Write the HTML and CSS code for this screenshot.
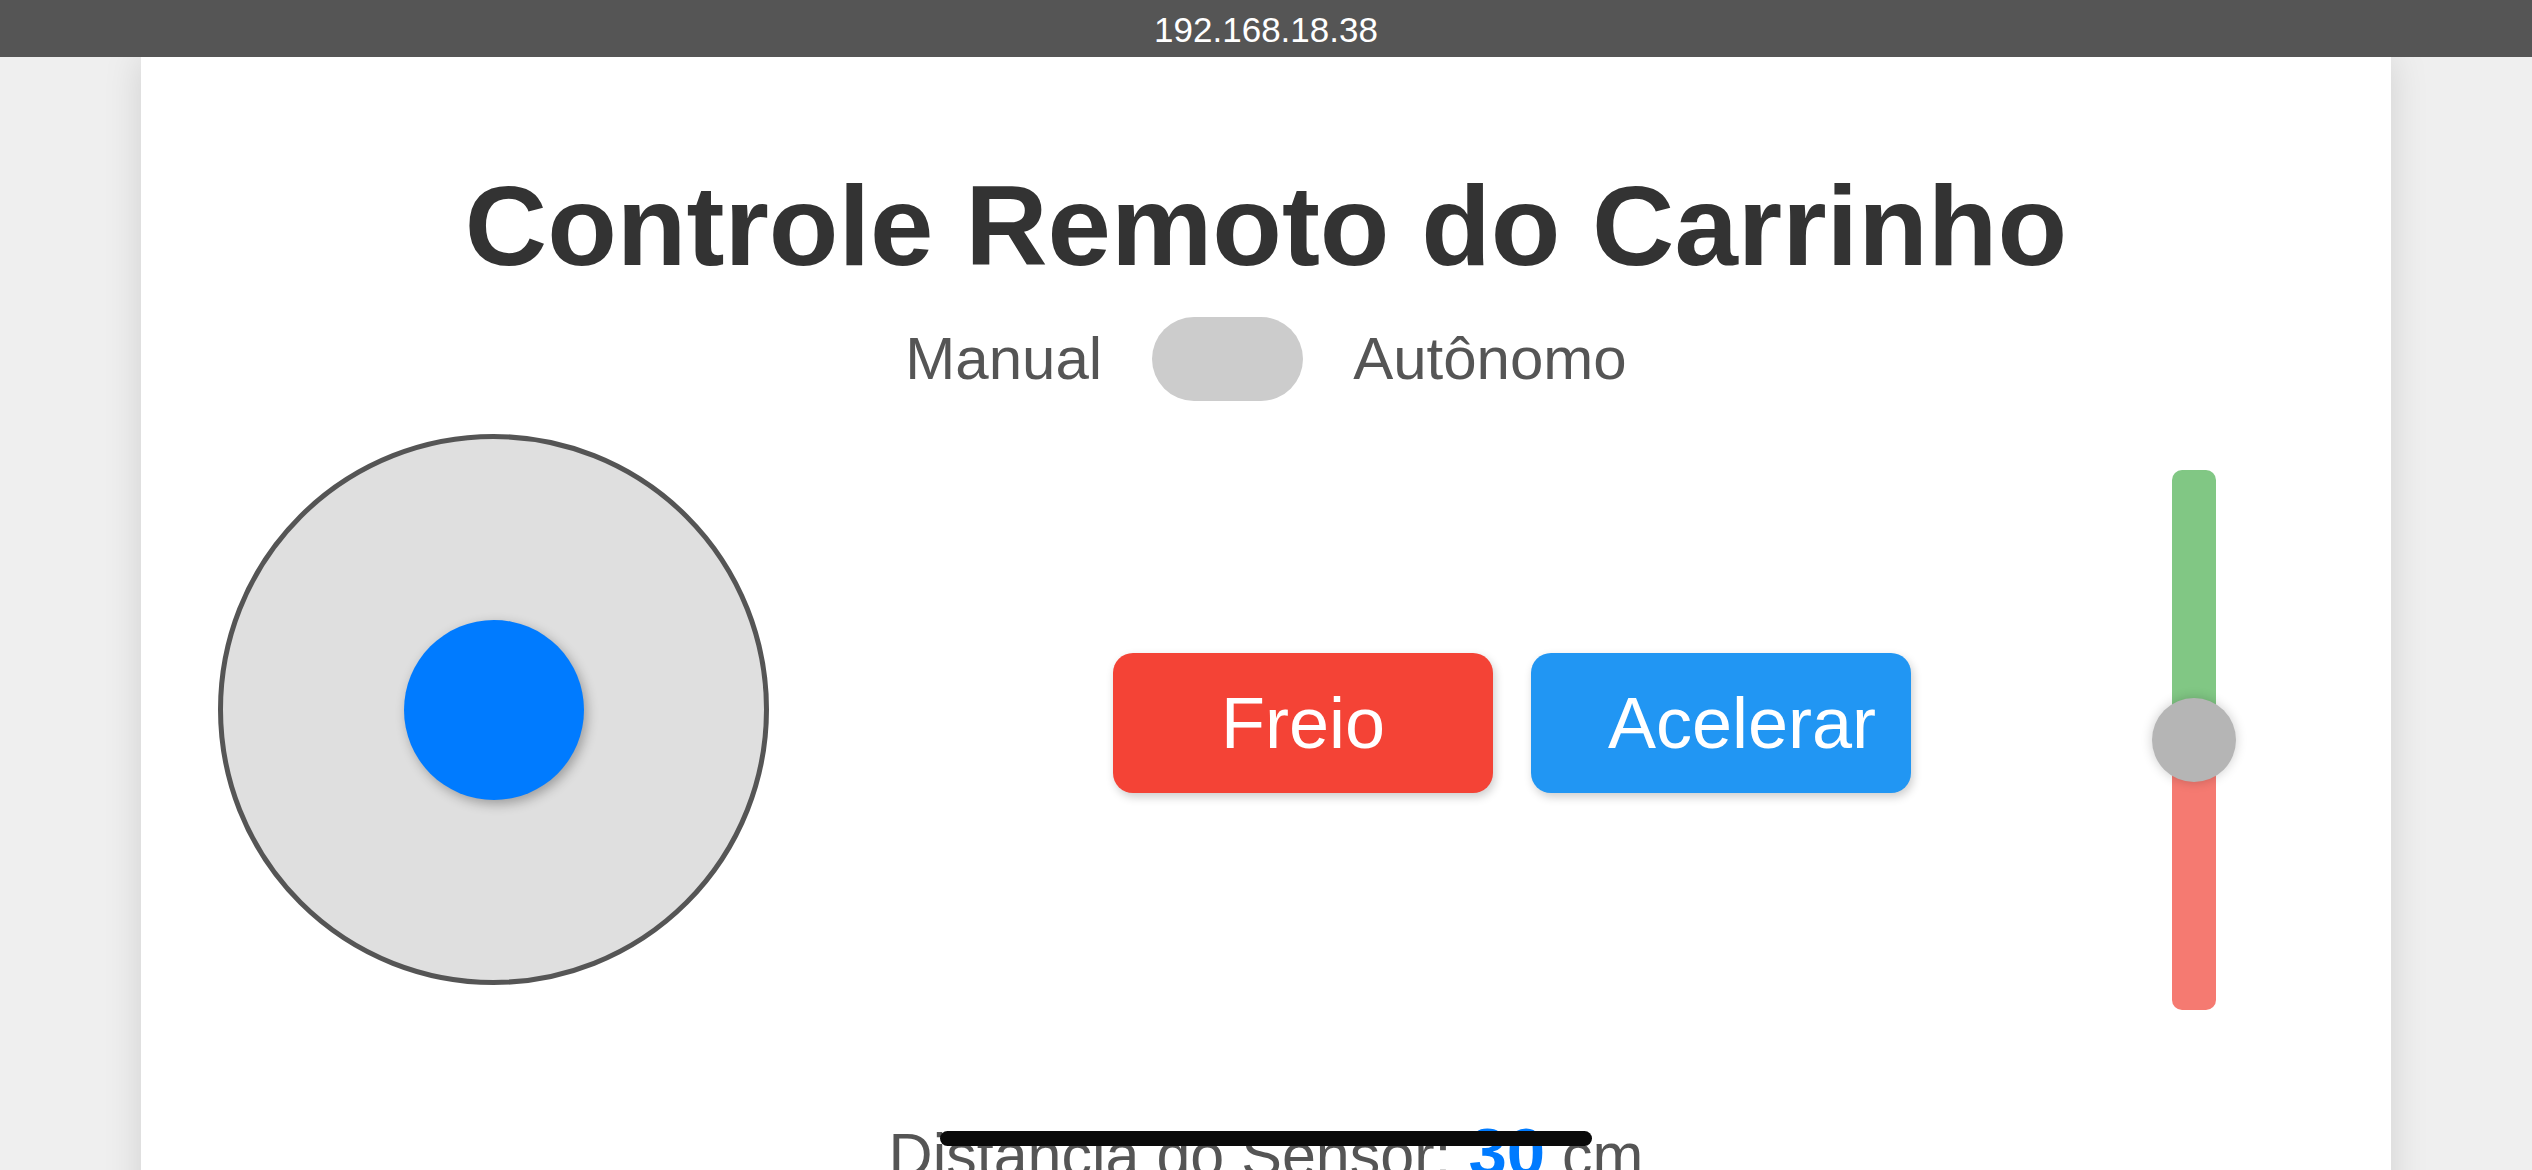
FILE: index.html
```html
<!DOCTYPE html>
<html lang="pt-BR">
<head>
<meta charset="utf-8">
<title>Controle Remoto do Carrinho</title>
<link rel="stylesheet" href="styles.css">
</head>
<body>
<div class="topbar">192.168.18.38</div>
<main class="card">
  <h1 class="title">Controle Remoto do Carrinho</h1>
  <div class="mode-row">
    <span class="mode-label">Manual</span>
    <span class="toggle"></span>
    <span class="mode-label">Autônomo</span>
  </div>
  <div class="controls">
    <div class="joystick">
      <div class="joy-knob"></div>
    </div>
    <div class="buttons">
      <button class="btn btn-brake">Freio</button>
      <button class="btn btn-accel">Acelerar</button>
    </div>
    <div class="slider">
      <div class="slider-track"></div>
      <div class="slider-thumb"></div>
    </div>
  </div>
  <p class="distance">Distância do Sensor: <span class="distance-value">30</span> cm</p>
</main>
<div class="home-indicator"></div>
</body>
</html>
```
FILE: styles.css
```css
html, body {
  margin: 0;
  padding: 0;
  height: 100%;
  overflow: hidden;
}
body {
  background: #efefef;
  font-family: "Liberation Sans", Arial, sans-serif;
}
.topbar {
  height: 57px;
  background: #555555;
  color: #ffffff;
  font-size: 35px;
  line-height: 60px;
  text-align: center;
  position: relative;
  z-index: 2;
}
.card {
  width: 2250px;
  margin: 0 auto;
  background: #ffffff;
  box-shadow: 0 0 36px rgba(0, 0, 0, 0.13);
  min-height: 1400px;
  padding: 1px 0 0;
  box-sizing: border-box;
}
.title {
  margin: 111px 0 0;
  font-size: 114px;
  line-height: 114px;
  font-weight: bold;
  color: #333333;
  text-align: center;
}
.mode-row {
  margin-top: 34px;
  display: flex;
  justify-content: center;
  align-items: center;
  gap: 50px;
  height: 84px;
}
.mode-label {
  font-size: 60px;
  line-height: 84px;
  color: #555555;
}
.toggle {
  width: 151px;
  height: 84px;
  border-radius: 42px;
  background: #cccccc;
}
.controls {
  margin-top: 33px;
  display: flex;
  align-items: flex-start;
  padding-left: 77px;
}
.joystick {
  position: relative;
  width: 551px;
  height: 551px;
  box-sizing: border-box;
  border: 5px solid #555555;
  border-radius: 50%;
  background: #dfdfdf;
}
.joy-knob {
  position: absolute;
  left: 50%;
  top: 50%;
  width: 180px;
  height: 180px;
  margin: -90px 0 0 -90px;
  border-radius: 50%;
  background: #007bff;
  box-shadow: 3px 4px 12px rgba(0, 0, 0, 0.3);
}
.buttons {
  margin-left: 344px;
  margin-top: 219px;
  display: flex;
  gap: 38px;
}
.btn {
  width: 380px;
  height: 140px;
  border: none;
  border-radius: 20px;
  color: #ffffff;
  font-family: "Liberation Sans", Arial, sans-serif;
  font-size: 72px;
  padding: 0;
  box-shadow: 2px 4px 10px rgba(0, 0, 0, 0.2);
}
.btn-brake {
  background: #f44336;
}
.btn-accel {
  background: #2196f3;
  padding-left: 42px;
}
.slider {
  position: relative;
  width: 84px;
  height: 540px;
  margin-left: 241px;
  margin-top: 36px;
}
.slider-track {
  width: 44px;
  height: 540px;
  margin: 0 auto;
  border-radius: 10px;
  background: linear-gradient(to bottom, #81c784 0%, #81c784 50%, #f57a71 50%, #f57a71 100%);
}
.slider-thumb {
  position: absolute;
  left: 0;
  top: 228px;
  width: 84px;
  height: 84px;
  border-radius: 50%;
  background: #b5b5b5;
  box-shadow: 0 0 12px rgba(0, 0, 0, 0.2);
}
.distance {
  margin: 108px 0 0;
  font-size: 61px;
  line-height: 70px;
  color: #555555;
  text-align: center;
}
.distance-value {
  font-size: 69px;
  line-height: 1;
  font-weight: bold;
  color: #007bff;
}
.home-indicator {
  position: fixed;
  left: 50%;
  bottom: 24px;
  width: 652px;
  height: 15px;
  margin-left: -326px;
  border-radius: 8px;
  background: #0a0a0a;
  z-index: 3;
}
```
